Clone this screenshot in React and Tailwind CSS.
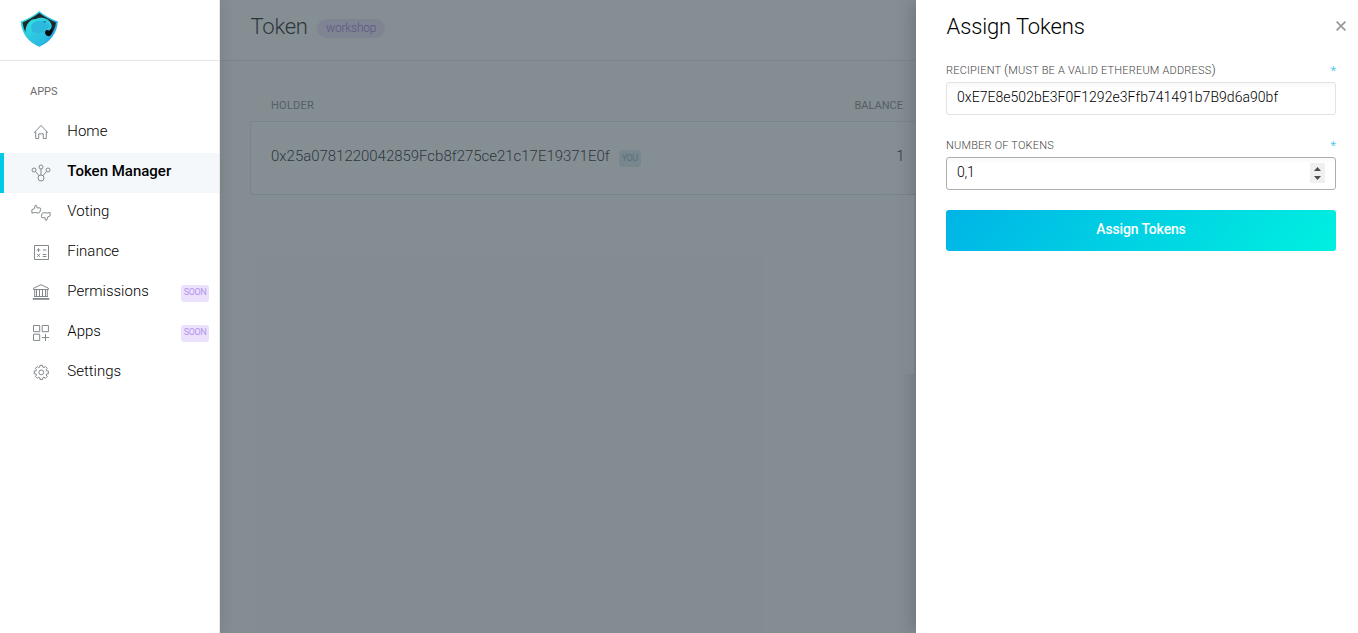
import React from "react";

const gearPath = (() => {
  const cx = 10.3, cy = 9.4, points = [];
  for (let i = 0; i < 8; i++) {
    const a = (i * Math.PI) / 4 - Math.PI / 2;
    [[-0.28, 5.5], [-0.19, 7.2], [0.19, 7.2], [0.28, 5.5]].forEach(([d, r]) => {
      points.push(`${(cx + r * Math.cos(a + d)).toFixed(2)} ${(cy + r * Math.sin(a + d)).toFixed(2)}`);
    });
  }
  return `M${points.join("L")}Z`;
})();

const thumb = "M.9 6.6 3.2 5.8 4.3 2.3Q5.8 1.9 5.9 3.4V4.9H9Q9.9 5 9.6 6.3L8.9 9Q8.6 9.9 7.7 9.9L3.4 9.6.9 10.1Z";

const icons = {
  home: <path d="M3 9.9 10 2.4 17 9.9M4.7 8.4V15.6H7.7V10.8H12.3V15.6H15.3V8.4" />,
  token: (
    <>
      <circle cx="3" cy="7" r="2" />
      <circle cx="10" cy="4" r="2" />
      <circle cx="17" cy="7" r="2" />
      <circle cx="10" cy="15" r="3" />
      <path d="M10 6V12M4.5 8.5 8 12.7M15.5 8.5 12 12.7" />
    </>
  ),
  voting: (
    <>
      <path d={thumb} />
      <path d={thumb} transform="rotate(180 10 9.8)" />
    </>
  ),
  finance: (
    <path d="M3.5 2.5H17.5V16.5H3.5ZM5.7 7H9.3M7.5 5.2V8.8M11.8 7H15.4M6.1 10.9 9 13.8M9 10.9 6.1 13.8M11.8 11.5H15.4M11.8 13.5H15.4" />
  ),
  permissions: (
    <path d="M2.5 5.3 10 1.7 17.5 5.3V6.5H2.5ZM3.7 6.5V13.5M5.5 6.5V13.5M8.5 6.5V13.5M11.5 6.5V13.5M14.5 6.5V13.5M16.3 6.5V13.5M3 13.5H17M2 15.5H18V16.3H2Z" />
  ),
  apps: <path d="M2.5 2.5H8.7V8.7H2.5ZM11.2 2.5H17.4V8.7H11.2ZM2.5 11.2H8.7V17.4H2.5ZM14.5 11V18M11 14.5H18" />,
  settings: (
    <>
      <path d={gearPath} />
      <circle cx="10.3" cy="9.4" r="2.4" />
    </>
  ),
};

const menu = [
  { icon: "home", label: "Home" },
  { icon: "token", label: "Token Manager", active: true },
  { icon: "voting", label: "Voting" },
  { icon: "finance", label: "Finance" },
  { icon: "permissions", label: "Permissions", soon: true },
  { icon: "apps", label: "Apps", soon: true },
  { icon: "settings", label: "Settings" },
];

function Logo() {
  return (
    <svg width="40" height="38" viewBox="0 0 40 38">
      <defs>
        <linearGradient id="shield" x1="0" y1="0" x2="1" y2="0.6">
          <stop offset="0" stopColor="#2ee6da" />
          <stop offset="1" stopColor="#2ba3e2" />
        </linearGradient>
        <linearGradient id="eagle" x1="0.2" y1="0" x2="0.8" y2="1">
          <stop offset="0" stopColor="#2fe0df" />
          <stop offset="1" stopColor="#2ab2e2" />
        </linearGradient>
      </defs>
      <path d="M19.3 1.1C24.5 5.5 31 9.3 37.9 11.6 37 23 30.5 32.5 19.3 36.8 8 32.5 1.5 23 .7 11.6 7.6 9.3 14.1 5.5 19.3 1.1Z" fill="url(#shield)" />
      <path d="M19.3 2.9C24.5 6.7 30 10 36 12.4 35.4 17.5 33.6 20.6 31.6 23.4L25 24 5.6 22.2C3.9 19 3 16 2.6 12.4 8.6 10 14.1 6.7 19.3 2.9Z" fill="#20272a" />
      <path d="M5.4 22C5.8 13.5 10.5 8.8 15.9 9 20.8 6.4 29.6 7.8 31.6 15 32.1 17.3 30.8 20.5 28.6 20.5 26 19.7 24.5 21.8 25.3 24 26.3 26.6 28.6 26.6 30.5 25.4 27.5 29.8 23.7 33.6 19.3 35.7 12.8 33.2 8 28 5.4 22Z" fill="url(#eagle)" />
      <path d="M11.2 17C11.5 11.8 18 9.5 23 11.8 28 13 31.2 15.8 27.5 18.7 29 20 25.5 21.7 22 22.5 16 24.7 11 22 11.2 17Z" fill="#2cb9dd" />
      <path d="M22.3 11.3 26.5 11.8 25 12.6Z" fill="#153d4c" />
      <path d="M32 17.5C33.5 21 31.5 26.3 28.6 26.2 25.6 26 24.3 22.6 26 20.6 27.5 19 28.2 21.8 29.7 20.7Z" fill="#050b0e" />
    </svg>
  );
}

function Soon() {
  return (
    <span className="flex h-[17px] w-7 items-center justify-center rounded-[3px] bg-[#ebe1fd] pb-px text-[9px] leading-none tracking-[-0.45px] text-[#b495ea]">
      SOON
    </span>
  );
}

function Sidebar() {
  return (
    <aside className="relative z-10 flex h-full w-[220px] shrink-0 flex-col border-r border-[#e6e6e6] bg-white shadow-[1px_0_14px_rgba(0,0,0,0.1)]">
      <div className="h-[61px] border-b border-[#e6e6e6] pl-5 pt-2.5">
        <Logo />
      </div>
      <h2 className="h-[52px] pl-[30px] pt-[23px] text-[11px] font-normal leading-4 text-[#6d6d6d]">APPS</h2>
      <nav className="flex flex-col">
        {menu.map((m) => (
          <div
            key={m.label}
            className={
              m.active
                ? "flex h-10 items-center border-l-4 border-[#00cbe6] bg-[#f4f8fa] pl-[27px] pr-2.5"
                : "flex h-10 items-center pl-[31px] pr-2.5"
            }
          >
            <svg width="20" height="20" viewBox="0 0 20 20" fill="none" stroke="#82898c" strokeWidth="1" className="mr-[16.3px]">
              {icons[m.icon]}
            </svg>
            <span
              className={
                m.active
                  ? "flex-1 whitespace-nowrap pb-1 text-[15px] font-medium text-black"
                  : "flex-1 whitespace-nowrap pb-1 text-[15px] font-light text-black"
              }
            >
              {m.label}
            </span>
            {m.soon && <Soon />}
          </div>
        ))}
      </nav>
    </aside>
  );
}

function Main() {
  return (
    <main className="relative h-full min-w-0 flex-1 bg-[#f9fbfc]">
      <header className="flex h-[61px] border-b border-[#e6e6e6] bg-white pl-[30.5px]">
        <h1 className="pt-[11px] text-[22px] font-light leading-8 tracking-[-0.25px] text-black">Token</h1>
        <span className="ml-[9.5px] mt-[19px] flex h-[19px] w-[68px] items-center justify-center rounded-full bg-[#ebe1fd] pb-0.5 text-xs font-light leading-none tracking-[-0.2px] text-[#8a62d8]">
          workshop
        </span>
      </header>
      <div className="pl-[30px]">
        <div className="flex h-[60px] justify-between pl-[21px] pr-[13px] pt-[37px] text-[11px] leading-4 text-[#777]">
          <span className="tracking-[0.25px]">HOLDER</span>
          <span>BALANCE</span>
        </div>
        <div className="flex h-[74px] justify-between rounded-l-[3px] border border-r-0 border-[#e0e4e6] bg-white pl-5 pr-[11.5px] text-[15px] font-light text-black">
          <div className="flex">
            <span className="pt-[22px] leading-6 tracking-[-0.02px]">0x25a0781220042859Fcb8f275ce21c17E19371E0f</span>
            <span className="ml-[9px] mt-7 flex h-[17px] w-[22px] items-center justify-center rounded-[3px] bg-[#d9ecf0] pb-px text-[9px] font-normal leading-none tracking-[-0.5px] text-[#84abb8]">
              YOU
            </span>
          </div>
          <span className="pt-[22px] leading-6">1</span>
        </div>
      </div>
      <div className="absolute inset-0 bg-[rgba(68,81,89,0.65)]" />
    </main>
  );
}

function Label({ children }) {
  return (
    <div className="flex h-4 justify-between text-[11px] font-light leading-4 tracking-[0.2px] text-[#444]">
      <span className="whitespace-nowrap">{children}</span>
      <span className="text-[13px] font-light tracking-normal text-[#33bdea]">*</span>
    </div>
  );
}

function Panel() {
  return (
    <section className="relative z-10 h-full w-[442px] shrink-0 bg-white pl-[30px] pr-[22px] shadow-[-2px_0_18px_rgba(0,0,0,0.2)]">
      <div className="absolute -left-[42px] top-[195px] h-[179px] w-10 bg-[linear-gradient(90deg,rgba(132,140,146,0),rgba(131,140,146,0.75))]" />
      <div className="-mr-3 flex h-[63px] items-start justify-between">
        <h2 className="pl-[0.5px] pt-[11px] text-[22px] font-light leading-8 tracking-[-0.12px] text-black">Assign Tokens</h2>
        <svg width="10" height="10" viewBox="0 0 10 10" className="mr-0.5 mt-[21px]" stroke="#979b9e" strokeWidth="1.8">
          <path d="M.6.6 9.4 9.4M9.4.6.6 9.4" />
        </svg>
      </div>
      <Label>
        RECIPIENT <span className="text-[13px] leading-none">(</span>MUST BE A VALID ETHEREUM ADDRESS
        <span className="text-[13px] leading-none">)</span>
      </Label>
      <div className="mt-[3px] h-[33px] rounded-[3px] border border-[#e3e3e3] pl-2.5 text-sm font-light leading-[29px] tracking-[0.04px] text-black shadow-[inset_0_4px_3px_rgba(0,0,0,0.02)]">
        0xE7E8e502bE3F0F1292e3Ffb741491b7B9d6a90bf
      </div>
      <div className="h-[23px]" />
      <Label>NUMBER OF TOKENS</Label>
      <div className="mt-[3px] flex h-[33px] items-start justify-between rounded-[3px] border border-[#adadad] pl-2.5 pr-2.5 text-sm font-light leading-[29px] text-black shadow-[inset_0_4px_3px_rgba(0,0,0,0.02)]">
        <span className="tracking-[-0.2px]">0,1</span>
        <svg width="15" height="20" viewBox="0 0 15 20" className="mt-[5px] bg-[#f0f0f0]">
          <path d="M4 8 7.5 4 11 8ZM4 13H11L7.5 17Z" fill="#4d4d4d" />
        </svg>
      </div>
      <button className="mt-5 block h-[41px] w-full rounded-[3px] bg-[linear-gradient(130deg,#00b4e6,#00f0e0)] pb-[3px] text-sm font-medium tracking-[-0.15px] text-white">
        Assign Tokens
      </button>
    </section>
  );
}

export default function App() {
  return (
    <div className="flex h-[633px] w-[1358px] overflow-hidden bg-white font-['Roboto','Liberation_Sans',sans-serif]">
      <Sidebar />
      <Main />
      <Panel />
    </div>
  );
}
